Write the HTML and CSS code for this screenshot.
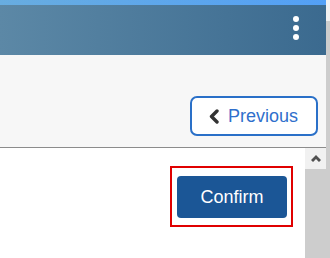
FILE: index.html
```html
<!DOCTYPE html>
<html>
<head>
<meta charset="utf-8">
<link rel="stylesheet" href="styles.css">
</head>
<body>
<div class="page">
  <div class="main">
    <div class="strip"></div>
    <header class="header">
      <div class="kebab"><span></span><span></span><span></span></div>
    </header>
    <div class="toolbar">
      <button class="btn-prev">
        <svg class="chev" width="12" height="15" viewBox="0 0 12 15"><polyline points="9,2 3.5,7.5 9,13" fill="none" stroke="#333" stroke-width="3.4" stroke-linecap="round" stroke-linejoin="round"/></svg>
        <span>Previous</span>
      </button>
    </div>
    <div class="content">
      <div class="body">
        <div class="focus">
          <button class="btn-confirm">Confirm</button>
        </div>
      </div>
      <div class="vscroll">
        <div class="vscroll-btn">
          <svg width="10" height="7" viewBox="0 0 10 7"><polygon points="5,0 10,5 8,7 5,4 2,7 0,5" fill="#505050"/></svg>
        </div>
        <div class="vscroll-thumb"></div>
      </div>
    </div>
  </div>
  <div class="outer-scroll">
    <div class="outer-track"></div>
    <div class="outer-thumb"></div>
  </div>
</div>
</body>
</html>
```
FILE: styles.css
```css
html, body {
  margin: 0;
  padding: 0;
  background: #fff;
  font-family: "Liberation Sans", Arial, sans-serif;
}
.page {
  display: flex;
  width: 330px;
  height: 258px;
  overflow: hidden;
}
.main {
  width: 326px;
  display: flex;
  flex-direction: column;
}
.strip {
  height: 5px;
  background: linear-gradient(90deg, #68ade0, #53a0f6);
}
.header {
  height: 50px;
  background: linear-gradient(90deg, #5c88a6, #3b6a8f);
  display: flex;
  justify-content: flex-end;
  align-items: flex-start;
}
.kebab {
  display: flex;
  flex-direction: column;
  gap: 3px;
  margin-top: 11px;
  margin-right: 27px;
}
.kebab span {
  width: 6px;
  height: 6px;
  border-radius: 50%;
  background: #fff;
}
.toolbar {
  height: 92px;
  background: #f7f7f7;
  border-bottom: 1px solid #8c8c8c;
  display: flex;
  justify-content: flex-end;
  align-items: flex-start;
}
.btn-prev {
  margin-top: 41px;
  margin-right: 8px;
  width: 128px;
  height: 40px;
  box-sizing: border-box;
  border: 2px solid #2a70c8;
  border-radius: 7px;
  background: #fff;
  color: #2f6fcc;
  font-family: "Liberation Sans", Arial, sans-serif;
  font-size: 18px;
  display: flex;
  align-items: center;
  padding: 0 0 0 16px;
  gap: 8px;
  cursor: pointer;
}
.chev {
  flex: none;
}
.content {
  flex: 1;
  display: flex;
}
.body {
  flex: 1;
  display: flex;
  justify-content: flex-end;
  align-items: flex-start;
}
.focus {
  margin-top: 18px;
  margin-right: 12px;
  border: 2px solid #e00000;
  padding: 8px 4px 7px 5px;
  display: flex;
}
.btn-confirm {
  width: 110px;
  height: 42px;
  border: none;
  border-radius: 4px;
  background: #1b5696;
  color: #fff;
  font-family: "Liberation Sans", Arial, sans-serif;
  font-size: 18px;
  padding: 0;
}
.vscroll {
  width: 21px;
  display: flex;
  flex-direction: column;
}
.vscroll-btn {
  height: 21px;
  background: #f1f1f1;
  display: flex;
  align-items: center;
  justify-content: center;
}
.vscroll-thumb {
  flex: 1;
  background: #cdcdcd;
}
.outer-scroll {
  width: 4px;
  display: flex;
  flex-direction: column;
}
.outer-track {
  height: 21px;
  background: #f1f1f1;
}
.outer-thumb {
  flex: 1;
  background: #cdcdcd;
}
```
